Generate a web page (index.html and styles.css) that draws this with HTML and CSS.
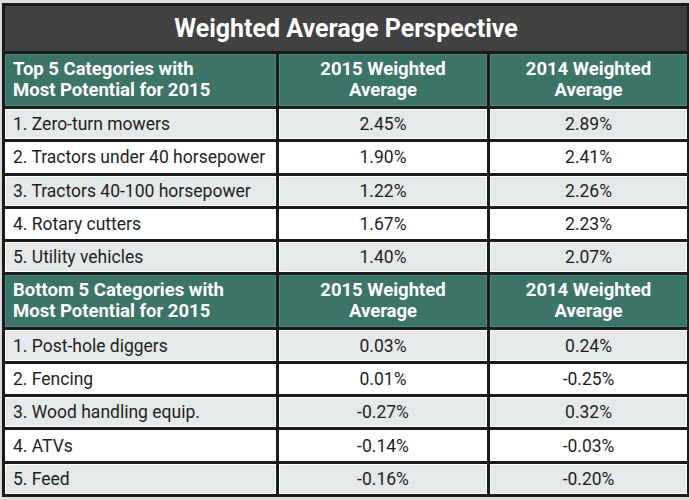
FILE: index.html
```html
<!DOCTYPE html>
<html>
<head>
<meta charset="utf-8">
<link rel="stylesheet" href="styles.css">
</head>
<body>
<div class="frame">
<table class="wa">
  <colgroup><col class="c1"><col class="c2"><col class="c3"></colgroup>
  <tr class="title"><th colspan="3">Weighted Average Perspective</th></tr>
  <tr class="head">
    <th class="lbl">Top 5 Categories with<br>Most Potential for 2015</th>
    <th>2015 Weighted<br>Average</th>
    <th>2014 Weighted<br>Average</th>
  </tr>
  <tr class="row alt"><td>1. Zero-turn mowers</td><td>2.45%</td><td>2.89%</td></tr>
  <tr class="row"><td>2. Tractors under 40 horsepower</td><td>1.90%</td><td>2.41%</td></tr>
  <tr class="row alt"><td>3. Tractors 40-100 horsepower</td><td>1.22%</td><td>2.26%</td></tr>
  <tr class="row"><td>4. Rotary cutters</td><td>1.67%</td><td>2.23%</td></tr>
  <tr class="row alt"><td>5. Utility vehicles</td><td>1.40%</td><td>2.07%</td></tr>
  <tr class="head">
    <th class="lbl">Bottom 5 Categories with<br>Most Potential for 2015</th>
    <th>2015 Weighted<br>Average</th>
    <th>2014 Weighted<br>Average</th>
  </tr>
  <tr class="row alt"><td>1. Post-hole diggers</td><td>0.03%</td><td>0.24%</td></tr>
  <tr class="row"><td>2. Fencing</td><td>0.01%</td><td>-0.25%</td></tr>
  <tr class="row alt"><td>3. Wood handling equip.</td><td>-0.27%</td><td>0.32%</td></tr>
  <tr class="row"><td>4. ATVs</td><td>-0.14%</td><td>-0.03%</td></tr>
  <tr class="row alt"><td>5. Feed</td><td>-0.16%</td><td>-0.20%</td></tr>
</table>
</div>
</body>
</html>
```

FILE: styles.css
```css
html, body {
  margin: 0;
  padding: 0;
  background: #ffffff;
}
.frame {
  padding: 3px 2px 3px 2px;
  background: #dcdcdc;
  width: 685px;
  height: 494px;
}
.wa {
  border-collapse: collapse;
  width: 685px;
  table-layout: fixed;
  font-family: Roboto, "Liberation Sans", sans-serif;
  border: 3px solid #1b1b1b;
}
.c1 { width: 274px; }
.c2 { width: 211px; }
.c3 { width: 200px; }
.wa th, .wa td {
  border: 3px solid #1b1b1b;
  padding: 0;
}
.title th {
  height: 45px;
  background: #414141;
  color: #ffffff;
  font-size: 25px;
  font-weight: 700;
  text-align: center;
}
.head th {
  height: 52px;
  background: #3c7468;
  color: #ffffff;
  font-size: 18.5px;
  font-weight: 700;
  line-height: 21px;
  text-align: center;
  box-shadow: inset 0 0 0 1px #4f8a7f;
}
.head th.lbl {
  text-align: left;
  padding-left: 8px;
}
.row td {
  height: 30.3px;
  font-size: 17.5px;
  color: #1e1e1e;
  text-align: center;
  background: #ffffff;
  box-shadow: inset 0 0 0 1px #ffffff;
}
.row td:first-child {
  text-align: left;
  padding-left: 8px;
}
.row.alt td {
  background: #e6e9e9;
}
```
